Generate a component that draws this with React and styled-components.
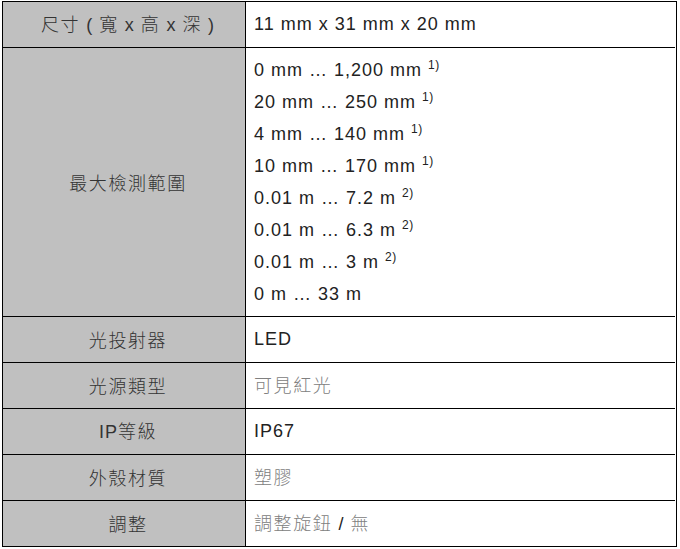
import styled, { createGlobalStyle } from "styled-components";

const GlobalStyle = createGlobalStyle`
  body {
    margin: 0;
    background: #ffffff;
    font-family: "Liberation Sans", Arial, "Noto Sans CJK TC", sans-serif;
  }
`;

const SpecTable = styled.div`
  display: grid;
  grid-template-columns: 243px 429px;
  width: 675px;
  margin: 1px 0 0 2px;
  border: 1px solid #000;
  box-sizing: border-box;
  font-size: 18px;
  letter-spacing: 1px;
`;

const Label = styled.div`
  background-color: #c0c0c0;
  color: #333;
  border-right: 1px solid #000;
  border-bottom: ${(p) => (p.$last ? "none" : "1px solid #000")};
  display: flex;
  align-items: center;
  justify-content: center;
  height: ${(p) => (p.$height || 45) - (p.$height ? 0 : 2)}px;
  padding: 0 0 ${(p) => (p.$height ? 0 : 2)}px 8px;
  line-height: 32px;
`;

const Value = styled.div`
  background-color: #fff;
  color: #222;
  border-bottom: ${(p) => (p.$last ? "none" : "1px solid #000")};
  display: flex;
  flex-direction: column;
  justify-content: center;
  padding: 0 8px ${(p) => (p.$height ? 0 : 2)}px;
  height: ${(p) => (p.$height || 45) - (p.$height ? 0 : 2)}px;
  line-height: 32px;
`;

const Line = styled.div`
  white-space: nowrap;
`;

const Han = styled.span`
  font-family: "Noto Sans CJK TC", sans-serif;
  font-weight: 300;
  letter-spacing: 1.6px;
  color: ${(p) => (p.$muted ? "#808080" : "inherit")};
`;

const Note = styled.sup`
  font-size: 12px;
  line-height: 0;
  vertical-align: 7px;
  letter-spacing: 0.5px;
`;

const ranges = [
  ["0 mm … 1,200 mm", "1)"],
  ["20 mm … 250 mm", "1)"],
  ["4 mm … 140 mm", "1)"],
  ["10 mm … 170 mm", "1)"],
  ["0.01 m … 7.2 m", "2)"],
  ["0.01 m … 6.3 m", "2)"],
  ["0.01 m … 3 m", "2)"],
  ["0 m … 33 m", null],
];

export default function App() {
  return (
    <>
      <GlobalStyle />
      <SpecTable>
        <Label>
          <span>
            <Han>尺寸</Han> ( <Han>寬</Han> x <Han>高</Han> x <Han>深</Han> )
          </span>
        </Label>
        <Value>11 mm x 31 mm x 20 mm</Value>

        <Label $height={268}>
          <Han>最大檢測範圍</Han>
        </Label>
        <Value $height={268}>
          {ranges.map(([text, note]) => (
            <Line key={text}>
              {text}
              {note && (
                <>
                  {" "}
                  <Note>{note}</Note>
                </>
              )}
            </Line>
          ))}
        </Value>

        <Label>
          <Han>光投射器</Han>
        </Label>
        <Value>LED</Value>

        <Label>
          <Han>光源類型</Han>
        </Label>
        <Value>
          <Line>
            <Han $muted>可見紅光</Han>
          </Line>
        </Value>

        <Label>
          <span>
            IP<Han>等級</Han>
          </span>
        </Label>
        <Value>IP67</Value>

        <Label>
          <Han>外殼材質</Han>
        </Label>
        <Value>
          <Line>
            <Han $muted>塑膠</Han>
          </Line>
        </Value>

        <Label $last>
          <Han>調整</Han>
        </Label>
        <Value $last>
          <Line>
            <Han $muted>調整旋鈕</Han> / <Han $muted>無</Han>
          </Line>
        </Value>
      </SpecTable>
    </>
  );
}
